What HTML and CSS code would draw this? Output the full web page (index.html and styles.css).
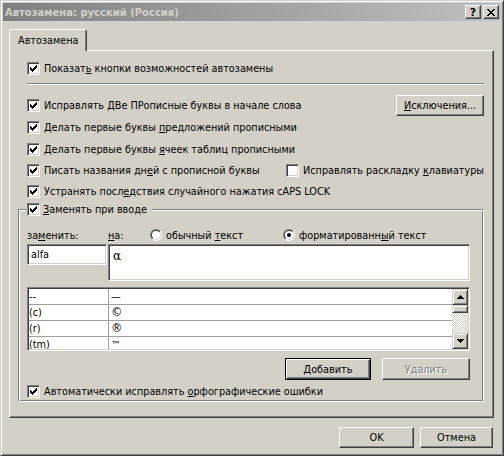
FILE: index.html
```html
<!DOCTYPE html>
<html lang="ru">
<head>
<meta charset="utf-8">
<link rel="stylesheet" href="styles.css">
</head>
<body>
<div class="window">
  <div class="titlebar">
    <span class="title">Автозамена: русский (Россия)</span>
    <div class="tbtns">
      <span class="tbtn help">?</span>
      <span class="tbtn close"><svg width="8" height="7" viewBox="0 0 8 7" shape-rendering="crispEdges"><path d="M0 0h2v1h-2zM6 0h2v1h-2zM1 1h2v1h-2zM5 1h2v1h-2zM2 2h4v1h-4zM3 3h2v1h-2zM2 4h4v1h-4zM1 5h2v1h-2zM5 5h2v1h-2zM0 6h2v1h-2zM6 6h2v1h-2z" fill="#000"/></svg></span>
    </div>
  </div>

  <div class="main">
    <div class="tabstrip"><div class="tab">Автозамена</div></div>
    <div class="panel">
      <div class="cb-row">
        <span class="cb on"><svg width="7" height="7" viewBox="0 0 7 7" shape-rendering="crispEdges"><path d="M0 2h1v3h-1zM1 3h1v3h-1zM2 4h1v3h-1zM3 3h1v3h-1zM4 2h1v3h-1zM5 1h1v3h-1zM6 0h1v3h-1z"/></svg></span>
        <span>Показат<u>ь</u> кнопки возможностей автозамены</span>
      </div>
      <div class="sep"></div>

      <div class="cb-row tall first">
        <div class="cb-group">
          <span class="cb on"><svg width="7" height="7" viewBox="0 0 7 7" shape-rendering="crispEdges"><path d="M0 2h1v3h-1zM1 3h1v3h-1zM2 4h1v3h-1zM3 3h1v3h-1zM4 2h1v3h-1zM5 1h1v3h-1zM6 0h1v3h-1z"/></svg></span>
          <span>Исправлять <u>Д</u>Ве ПРописные буквы в начале слова</span>
        </div>
        <span class="btn exc"><u>И</u>сключения...</span>
      </div>
      <div class="cb-row line r2">
        <span class="cb on"><svg width="7" height="7" viewBox="0 0 7 7" shape-rendering="crispEdges"><path d="M0 2h1v3h-1zM1 3h1v3h-1zM2 4h1v3h-1zM3 3h1v3h-1zM4 2h1v3h-1zM5 1h1v3h-1zM6 0h1v3h-1z"/></svg></span>
        <span>Делать первые буквы <u>п</u>редложений прописными</span>
      </div>
      <div class="cb-row line r3">
        <span class="cb on"><svg width="7" height="7" viewBox="0 0 7 7" shape-rendering="crispEdges"><path d="M0 2h1v3h-1zM1 3h1v3h-1zM2 4h1v3h-1zM3 3h1v3h-1zM4 2h1v3h-1zM5 1h1v3h-1zM6 0h1v3h-1z"/></svg></span>
        <span>Делать первые буквы <u>я</u>чеек таблиц прописными</span>
      </div>
      <div class="cb-row line">
        <div class="cb-group days">
          <span class="cb on"><svg width="7" height="7" viewBox="0 0 7 7" shape-rendering="crispEdges"><path d="M0 2h1v3h-1zM1 3h1v3h-1zM2 4h1v3h-1zM3 3h1v3h-1zM4 2h1v3h-1zM5 1h1v3h-1zM6 0h1v3h-1z"/></svg></span>
          <span>Писать названия дн<u>е</u>й с прописной буквы</span>
        </div>
        <div class="cb-group">
          <span class="cb"></span>
          <span>Исправлять раскладку <u>к</u>лавиатуры</span>
        </div>
      </div>
      <div class="cb-row line">
        <span class="cb on"><svg width="7" height="7" viewBox="0 0 7 7" shape-rendering="crispEdges"><path d="M0 2h1v3h-1zM1 3h1v3h-1zM2 4h1v3h-1zM3 3h1v3h-1zM4 2h1v3h-1zM5 1h1v3h-1zM6 0h1v3h-1z"/></svg></span>
        <span>Устранять посл<u>е</u>дствия случайного нажатия cAPS LOCK</span>
      </div>

      <div class="group">
        <div class="legend">
          <span class="cb on"><svg width="7" height="7" viewBox="0 0 7 7" shape-rendering="crispEdges"><path d="M0 2h1v3h-1zM1 3h1v3h-1zM2 4h1v3h-1zM3 3h1v3h-1zM4 2h1v3h-1zM5 1h1v3h-1zM6 0h1v3h-1z"/></svg></span>
          <span><u>З</u>аменять при вводе</span>
        </div>

        <div class="labels">
          <span class="lbl-from">за<u>м</u>енить:</span>
          <span class="lbl-to"><u>н</u>а:</span>
          <span class="radio-item r-plain">
            <svg class="radio" width="12" height="12" viewBox="0 0 12 12"><defs><linearGradient id="o1" x1="0" y1="0" x2="1" y2="1"><stop offset="0.5" stop-color="#808080"/><stop offset="0.5" stop-color="#ffffff"/></linearGradient><linearGradient id="i1" x1="0" y1="0" x2="1" y2="1"><stop offset="0.5" stop-color="#404040"/><stop offset="0.5" stop-color="#d4d0c8"/></linearGradient></defs><circle cx="6" cy="6" r="6" fill="url(#o1)"/><circle cx="6" cy="6" r="5" fill="url(#i1)"/><circle cx="6" cy="6" r="4" fill="#fff"/></svg>
            <span>обычный <u>т</u>екст</span>
          </span>
          <span class="radio-item">
            <svg class="radio" width="12" height="12" viewBox="0 0 12 12"><circle cx="6" cy="6" r="6" fill="url(#o1)"/><circle cx="6" cy="6" r="5" fill="url(#i1)"/><circle cx="6" cy="6" r="4" fill="#fff"/><circle cx="6" cy="6" r="2" fill="#000"/></svg>
            <span>форматированн<u>ы</u>й текст</span>
          </span>
        </div>

        <div class="inputs">
          <div class="field small">alfa</div>
          <div class="field big"><span class="alpha">α</span></div>
        </div>

        <div class="list">
          <div class="rows">
            <div class="lrow"><span class="c1">--</span><span class="c2">—</span></div>
            <div class="lrow"><span class="c1">(c)</span><span class="c2 sym">©&#xFE0E;</span></div>
            <div class="lrow"><span class="c1">(r)</span><span class="c2 sym">®&#xFE0E;</span></div>
            <div class="lrow"><span class="c1">(tm)</span><span class="c2">™&#xFE0E;</span></div>
          </div>
          <div class="vscroll">
            <span class="sbtn"><svg width="7" height="4" viewBox="0 0 7 4" shape-rendering="crispEdges"><path d="M3 0h1v1h-1zM2 1h3v1h-3zM1 2h5v1h-5zM0 3h7v1h-7z"/></svg></span>
            <span class="thumb"></span>
            <span class="track"></span>
            <span class="sbtn"><svg width="7" height="4" viewBox="0 0 7 4" shape-rendering="crispEdges"><path d="M0 0h7v1h-7zM1 1h5v1h-5zM2 2h3v1h-3zM3 3h1v1h-1z"/></svg></span>
          </div>
        </div>

        <div class="list-btns">
          <span class="btn default"><u>Д</u>обавить</span>
          <span class="btn disabled">Удалить</span>
        </div>

        <div class="cb-row last">
          <span class="cb on"><svg width="7" height="7" viewBox="0 0 7 7" shape-rendering="crispEdges"><path d="M0 2h1v3h-1zM1 3h1v3h-1zM2 4h1v3h-1zM3 3h1v3h-1zM4 2h1v3h-1zM5 1h1v3h-1zM6 0h1v3h-1z"/></svg></span>
          <span>Автоматически исправлять <u>о</u>рфографические ошибки</span>
        </div>
      </div>
    </div>

    <div class="dlg-btns">
      <span class="btn ok">OK</span>
      <span class="btn cancel">Отмена</span>
    </div>
  </div>
</div>
</body>
</html>
```

FILE: styles.css
```css
* { box-sizing: border-box; }

html, body {
  margin: 0;
  padding: 0;
  background: #d4d0c8;
}

body {
  font-family: "DejaVu Sans", "Liberation Sans", sans-serif;
  font-size: 9.7px;
  color: #000;
  width: 504px;
  height: 456px;
  overflow: hidden;
}

u { text-decoration: underline; text-underline-offset: 1px; }

.window {
  width: 504px;
  height: 456px;
  border: 1px solid;
  border-color: #d4d0c8 #404040 #404040 #d4d0c8;
  box-shadow: inset 1px 1px #fff, inset -1px -1px #808080;
  padding: 2px;
  background: #d4d0c8;
  display: flex;
  flex-direction: column;
}

.titlebar {
  height: 18px;
  flex: none;
  background: linear-gradient(to right, #808080, #c0c0c0);
  display: flex;
  align-items: center;
  justify-content: space-between;
  padding: 0 2px 0 2px;
}

.title {
  font-weight: bold;
  font-size: 10px;
  color: #d4d0c8;
  white-space: nowrap;
}

.tbtns { display: flex; gap: 2px; }

.tbtn {
  width: 16px;
  height: 14px;
  display: flex;
  align-items: center;
  justify-content: center;
  background: #d4d0c8;
  border: 1px solid;
  border-color: #fff #404040 #404040 #fff;
  box-shadow: inset -1px -1px #808080;
  font-weight: bold;
  font-size: 11px;
  line-height: 1;
}

.tbtn.help { padding-top: 1px; }

.main {
  flex: 1;
  display: flex;
  flex-direction: column;
  padding: 0 7px 0 6px;
}

.tabstrip {
  margin-top: 8px;
  display: flex;
}

.tab {
  position: relative;
  z-index: 1;
  width: 78px;
  height: 22px;
  margin-bottom: -1px;
  padding: 0 0 0 8px;
  display: flex;
  align-items: center;
  background: #d4d0c8;
  border-top: 1px solid #fff;
  border-left: 1px solid #fff;
  border-right: 1px solid #404040;
  border-radius: 2px 2px 0 0;
  box-shadow: inset -1px 0 #808080;
}

.panel {
  height: 368px;
  flex: none;
  border: 1px solid;
  border-color: #fff #404040 #404040 #fff;
  box-shadow: inset -1px -1px #808080;
  padding: 11px 9px 0 8px;
  display: flex;
  flex-direction: column;
}

.cb-row {
  display: flex;
  align-items: center;
  gap: 4px;
  padding-left: 9px;
  height: 13px;
  white-space: nowrap;
}

.cb-row.tall {
  height: 22px;
  justify-content: space-between;
  margin-top: 9px;
}

.cb-row.line { height: 21px; }
.cb-row.r2, .cb-row.r3 { margin-top: 1px; }

.cb-group {
  display: flex;
  align-items: center;
  gap: 4px;
}

.cb-group.days { width: 255px; }

.cb {
  width: 13px;
  height: 13px;
  flex: none;
  border: 1px solid;
  border-color: #808080 #fff #fff #808080;
  box-shadow: inset 1px 1px #404040, inset -1px -1px #d4d0c8;
  background: #fff;
  padding: 2px;
  display: flex;
}

.cb svg { display: block; fill: #000; }

.sep {
  margin: 8px 0 0 9px;
  height: 2px;
  border-top: 1px solid #808080;
  border-bottom: 1px solid #fff;
}

.btn {
  display: flex;
  align-items: center;
  justify-content: center;
  background: #d4d0c8;
  border: 1px solid;
  border-color: #fff #404040 #404040 #fff;
  box-shadow: inset -1px -1px #808080;
  white-space: nowrap;
}

.btn.exc { width: 88px; height: 21px; margin-top: 1px; }

.btn.default {
  border-color: #000;
  box-shadow: inset 1px 1px #fff, inset -1px -1px #404040, inset -2px -2px #808080;
}

.btn.disabled {
  color: #808080;
  text-shadow: 1px 1px #fff;
}

.group {
  margin-top: 7px;
  border: 1px solid;
  border-color: #808080 #fff #fff #808080;
  box-shadow: inset 1px 1px #fff, inset -1px -1px #808080;
  padding: 0 13px 3px 8px;
  display: flex;
  flex-direction: column;
}

.legend {
  display: flex;
  align-items: center;
  gap: 3px;
  width: fit-content;
  margin: -7px 0 0 -1px;
  padding: 0 5px 0 1px;
  background: #d4d0c8;
  height: 13px;
  white-space: nowrap;
}

.labels {
  margin-top: 10px;
  height: 18px;
  display: flex;
  align-items: center;
  white-space: nowrap;
}

.lbl-from { width: 81px; }
.lbl-to { width: 42px; }

.radio-item {
  display: flex;
  align-items: center;
  gap: 4px;
}

.radio-item.r-plain { width: 133px; }
.radio { display: block; flex: none; }

.inputs {
  display: flex;
  align-items: flex-start;
  gap: 1px;
}

.field {
  background: #fff;
  border: 1px solid;
  border-color: #808080 #fff #fff #808080;
  box-shadow: inset 1px 1px #404040, inset -1px -1px #d4d0c8;
}

.field.small {
  width: 80px;
  height: 21px;
  padding: 3px 0 0 3px;
  line-height: 14px;
}

.field.big {
  width: 362px;
  height: 37px;
  padding: 4px 0 0 4px;
}

.alpha {
  font-family: "DejaVu Serif", "Liberation Serif", serif;
  font-size: 12px;
}

.list {
  margin-top: 6px;
  width: 443px;
  height: 64px;
  background: #fff;
  border: 1px solid;
  border-color: #808080 #fff #fff #808080;
  box-shadow: inset 1px 1px #404040, inset -1px -1px #d4d0c8;
  padding: 1px;
  display: flex;
}

.rows {
  flex: 1;
  overflow: hidden;
  display: flex;
  flex-direction: column;
}

.lrow {
  flex: none;
  height: 16px;
  display: flex;
  border-bottom: 1px solid #a0a0a0;
  line-height: 15px;
  font-family: "DejaVu Sans", sans-serif;
  font-variant-emoji: text;
}

.c1 {
  width: 80px;
  padding-left: 0;
  border-right: 1px solid #a0a0a0;
}

.c2 { padding-left: 2px; color: #000; }
.c2.sym { font-size: 11.5px; }

.vscroll {
  width: 16px;
  flex: none;
  display: flex;
  flex-direction: column;
}

.sbtn, .thumb {
  flex: none;
  background: #d4d0c8;
  border: 1px solid;
  border-color: #d4d0c8 #404040 #404040 #d4d0c8;
  box-shadow: inset 1px 1px #fff, inset -1px -1px #808080;
}

.sbtn {
  height: 16px;
  display: flex;
  align-items: center;
  justify-content: center;
}

.sbtn svg { display: block; fill: #000; }

.thumb { height: 8px; }

.track {
  flex: 1;
  background-color: #fff;
  background-image: repeating-conic-gradient(#d4d0c8 0 25%, #fff 0 50%);
  background-size: 2px 2px;
}

.list-btns {
  margin-top: 7px;
  display: flex;
  justify-content: flex-end;
  gap: 11px;
}

.list-btns .btn { height: 22px; }
.list-btns .default { width: 86px; }
.list-btns .disabled { width: 88px; }

.cb-row.last { margin-top: 5px; padding-left: 0; }

.dlg-btns {
  margin-top: 9px;
  display: flex;
  justify-content: flex-end;
  gap: 6px;
  padding-right: 1px;
}

.dlg-btns .btn { height: 21px; }
.btn.ok { width: 75px; }
.btn.cancel { width: 73px; }
```
